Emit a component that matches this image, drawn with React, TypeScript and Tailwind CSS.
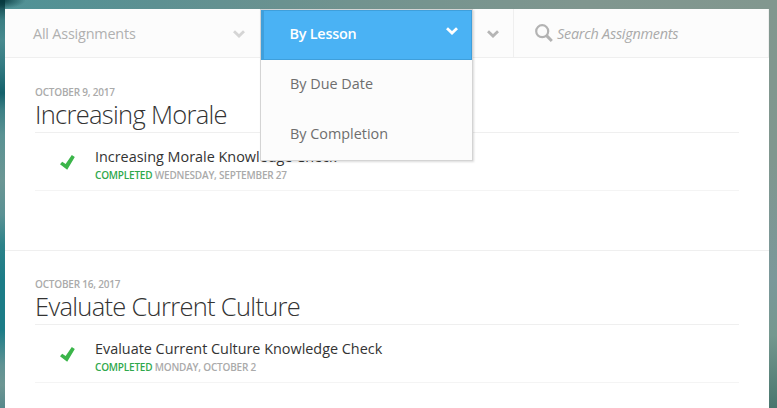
import React from "react";

const Chevron = ({ className = "" }: { className?: string }) => (
  <svg className={className} width="12" height="8" viewBox="0 0 12 8" fill="none" stroke="currentColor" strokeWidth="2.8">
    <path d="M1 1.2 L6 6 L11 1.2" />
  </svg>
);

type LessonProps = { date: string; title: string; completed: string; className: string };

const Lesson = ({ date, title, completed, className }: LessonProps) => (
  <section className={`h-[193px] border-b border-[#efefef] px-[30px] ${className}`}>
    <div className="h-[14px] text-[10px] font-semibold leading-[14px] tracking-[-0.2px] text-[#aaa] whitespace-nowrap">{date}</div>
    <h2 className="h-[34px] border-b border-[#efefef] text-[25.5px] font-light leading-[31px] tracking-[-0.7px] text-[#333] whitespace-nowrap">{title}</h2>
    <div className="flex h-[58px] border-b border-[#f4f4f4]">
      <svg className="ml-[25px] mt-[22px] shrink-0" width="15" height="16" viewBox="0 0 15 16">
        <path d="M0 9.2 L2.2 6.8 L5.6 9 L11.8 0 L14.8 2 L7.2 14.8 Z" fill="#3bb54a" />
      </svg>
      <div className="ml-[20px] pt-[13px] whitespace-nowrap">
        <div className="h-[22px] text-[14.4px] leading-[22px] text-[#333]">{title} Knowledge Check</div>
        <div className="h-[15px] text-[10px] font-semibold leading-[15px] tracking-[-0.2px] text-[#aaa]">
          <span className="text-[#2fa84c]">COMPLETED</span> {completed}
        </div>
      </div>
    </div>
  </section>
);

export default function App() {
  return (
    <div className="relative h-[408px] w-[777px] overflow-hidden bg-[linear-gradient(90deg,#4f9296_0%,#5d9092_20%,#71938f_45%,#80968f_75%,#82978f_100%)] pt-[9px] font-['Open_Sans','Noto_Sans',sans-serif]">
      <div className="absolute left-0 top-0 h-[9px] w-[26px] bg-[radial-gradient(ellipse_at_top_left,#06393f_0%,transparent_70%)]" />
      <div className="flex h-[399px]">
        <div className="-mt-[9px] h-[408px] w-[5px] shrink-0 bg-[linear-gradient(180deg,#06393f_0px,#3a7d82_20px,#488a8f_40px,#347b82_65px,#14616b_93px,#3d8085_110px,#5a9293_135px,#6b9694_180px,#5a9194_215px,#2c8289_245px,#1c7c87_280px,#1c7c87_330px,#5f9293_365px,#6d9693_385px,#57898c_408px)]" />
        <main className="w-[764px] shrink-0 bg-white">
          <header className="flex h-[49px] border-b border-r border-[#efefef] bg-[#fcfcfc] text-[14.4px]">
            <div className="flex w-[256px] items-center justify-between pl-[28px] pr-[16px] text-[#b0b0b0]">
              <span className="mt-px tracking-[-0.19px]">All Assignments</span>
              <Chevron className="mt-[2px] text-[#d5d5d5]" />
            </div>
            <div className="flex w-[253px] items-center justify-end border-r border-[#efefef] pr-[14px]">
              <Chevron className="mt-[2px] text-[#b5b5b5]" />
            </div>
            <div className="flex items-center pl-[21px] text-[#b3b3b3]">
              <svg width="18" height="19" viewBox="0 0 18 19" fill="none" stroke="currentColor">
                <circle cx="7.2" cy="7.2" r="6" strokeWidth="2.2" />
                <path d="M11.6 11.6 L16.8 17" strokeWidth="3" />
              </svg>
              <span className="ml-[4px] mt-px italic tracking-[-0.24px] text-[#aaa]">Search Assignments</span>
            </div>
          </header>
          <Lesson className="pt-[27px]" date="OCTOBER 9, 2017" title="Increasing Morale" completed="WEDNESDAY, SEPTEMBER 27" />
          <Lesson className="pt-[26px]" date="OCTOBER 16, 2017" title="Evaluate Current Culture" completed="MONDAY, OCTOBER 2" />
        </main>
        <div className="-mt-[9px] h-[408px] w-[8px] shrink-0 bg-[linear-gradient(180deg,#82978f_0px,#80978f_160px,#7b989a_280px,#75988f_335px,#49766e_408px)]" />
      </div>
      <div className="absolute left-[260px] top-[9px] w-[213px] border border-[#d4d4d4] bg-[#fcfcfc] text-[14.4px] text-[#6e6e6e] shadow-[1px_1px_2px_rgba(0,0,0,0.15)]">
        <div className="flex h-[50px] justify-between border border-l-[3px] border-[#3f9fdb] bg-[#4ab2f4] pl-[25.5px] pr-[13px] font-semibold leading-[46px] text-white">
          <span className="tracking-[-0.22px]">By Lesson</span>
          <Chevron className="mt-[16px]" />
        </div>
        <div className="h-[50px] pl-[29px] leading-[48px]">By Due Date</div>
        <div className="h-[50px] pl-[29px] leading-[48px]">By Completion</div>
      </div>
    </div>
  );
}
